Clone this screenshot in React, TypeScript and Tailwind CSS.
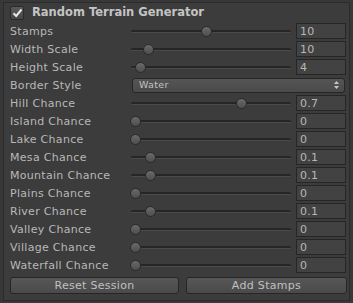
import React from 'react';

const rows: { label: string; value: string; pos: number }[] = [
  { label: 'Stamps', value: '10', pos: 206 },
  { label: 'Width Scale', value: '10', pos: 148 },
  { label: 'Height Scale', value: '4', pos: 140 },
  { label: 'Border Style', value: 'Water', pos: -1 },
  { label: 'Hill Chance', value: '0.7', pos: 241 },
  { label: 'Island Chance', value: '0', pos: 135 },
  { label: 'Lake Chance', value: '0', pos: 135 },
  { label: 'Mesa Chance', value: '0.1', pos: 150 },
  { label: 'Mountain Chance', value: '0.1', pos: 150 },
  { label: 'Plains Chance', value: '0', pos: 135 },
  { label: 'River Chance', value: '0.1', pos: 150 },
  { label: 'Valley Chance', value: '0', pos: 135 },
  { label: 'Village Chance', value: '0', pos: 135 },
  { label: 'Waterfall Chance', value: '0', pos: 135 },
];

const Slider = ({ pos }: { pos: number }) => (
  // track spans x 131..291 on the page
  <div className="relative h-[18px] w-[160px] shrink-0">
    <div className="absolute left-0 right-0 top-[8px] h-[3px] rounded-full bg-[#262626] border-b border-[#4a4a4a]" />
    <div
      className="absolute top-[4px] h-[11px] w-[11px] rounded-full border border-[#2a2a2a] bg-gradient-to-b from-[#6a6a6a] to-[#4e4e4e]"
      style={{ left: pos - 131 - 5 }}
    />
  </div>
);

export default function App() {
  return (
    <div className="w-[353px] h-[303px] bg-[#383838] pt-[2px] px-[3px] text-[#b8b8b8] text-[11px] leading-none" style={{ fontFamily: '"DejaVu Sans", Verdana, sans-serif' }}>
      <div className="h-[299px] border border-[#2b2b2b] bg-[#3c3c3c] pl-[6px] pr-[2px] pt-[1px]">
        <div className="flex h-[18px] items-center gap-[8px]">
          <div className="flex h-[14px] w-[14px] items-center justify-center rounded-[2px] border border-[#2a2a2a] bg-gradient-to-b from-[#5a5a5a] to-[#474747]">
            <svg width="11" height="10" viewBox="0 0 11 10">
              <path d="M1.5 5.2 L4.2 8 L9.5 1.5" fill="none" stroke="#e8e8e8" strokeWidth="2" />
            </svg>
          </div>
          <span className="font-bold text-[#c4c4c4] text-[11.5px]">Random Terrain Generator</span>
        </div>
        {rows.map((r) => (
          <div key={r.label} className="flex h-[18px] items-center">
            <span className="w-[121px] shrink-0 tracking-[0.3px]">{r.label}</span>
            {r.pos < 0 ? (
              <div className="ml-[1px] flex h-[15px] w-[213px] items-center justify-between rounded-[3px] border border-[#262626] bg-gradient-to-b from-[#555] to-[#4a4a4a] pl-[6px] pr-[5px] text-[9.5px] text-[#c2c2c2]">
                <span className="tracking-[0.3px]">Water</span>
                <svg width="5" height="8" viewBox="0 0 5 8">
                  <path d="M2.5 0 L5 3 L0 3 Z M0 5 L5 5 L2.5 8 Z" fill="#c8c8c8" />
                </svg>
              </div>
            ) : (
              <>
                <Slider pos={r.pos} />
                <div className="ml-[5px] flex h-[16px] w-[50px] items-center border border-[#262626] bg-[#424242] pl-[3px] tracking-[0.3px]">
                  {r.value}
                </div>
              </>
            )}
          </div>
        ))}
        <div className="mt-[3px] flex gap-[7px] text-[#c0c0c0] tracking-[0.3px]">
          <button className="flex h-[17px] w-[169px] items-center justify-center rounded-[3px] border border-[#262626] bg-gradient-to-b from-[#575757] to-[#4a4a4a]">Reset Session</button>
          <button className="flex h-[17px] w-[161px] items-center justify-center rounded-[3px] border border-[#262626] bg-gradient-to-b from-[#575757] to-[#4a4a4a]">Add Stamps</button>
        </div>
      </div>
    </div>
  );
}
